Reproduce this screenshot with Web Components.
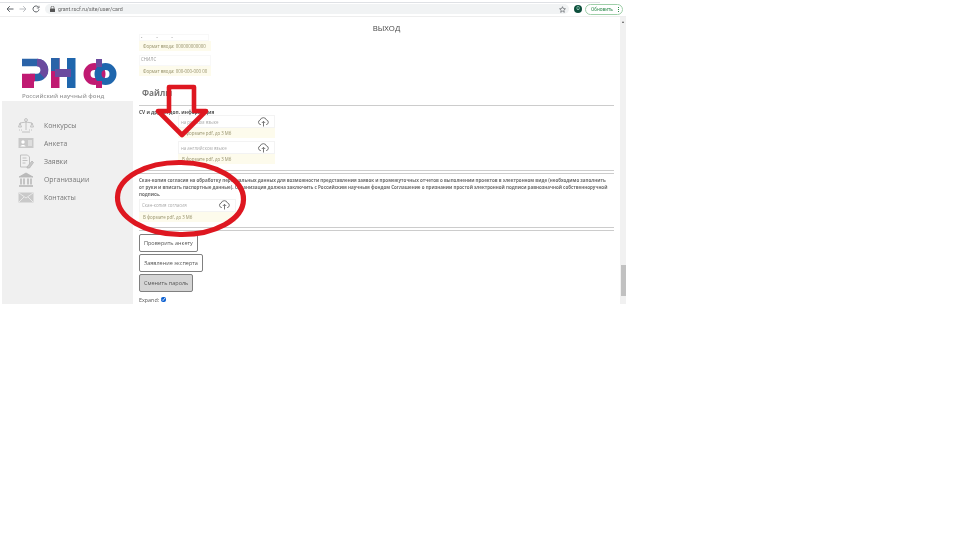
<!DOCTYPE html>
<html lang="ru">
<head>
<meta charset="utf-8">
<title>РНФ</title>
<style>
  html, body { margin: 0; background: #fff; }
  body { font-family: "Open Sans", "Liberation Sans", sans-serif; }
</style>
</head>
<body>
<browser-shot>
  <browser-bar slot="bar" url="grant.rscf.ru/site/user/card"></browser-bar>
  <site-sidebar slot="side">
    <nav-item icon="scales">Конкурсы</nav-item>
    <nav-item icon="card">Анкета</nav-item>
    <nav-item icon="doc">Заявки</nav-item>
    <nav-item icon="bank">Организации</nav-item>
    <nav-item icon="mail">Контакты</nav-item>
  </site-sidebar>
  <profile-page slot="main"></profile-page>
</browser-shot>

<script>
class BrowserShot extends HTMLElement {
  constructor() {
    super();
    this.attachShadow({ mode: "open" }).innerHTML = `
    <style>
      :host { display: block; position: relative; width: 626px; height: 304px; overflow: hidden; background: #fff; filter: blur(.4px); }
      .page { display: grid; grid-template-columns: 133px 1fr 6px; height: 287px; }
      .scroll { background: #f1f1f1; position: relative; }
      .scroll i { position: absolute; left: 1px; right: 0; top: 248px; height: 31px; background: #c1c1c1; }
      .scroll b { position: absolute; left: 2px; top: 4px; border: 1.5px solid transparent; border-bottom: 2px solid #555; border-top: 0; }
      svg { position: absolute; left: 0; top: 0; }
    </style>
    <slot name="bar"></slot>
    <div class="page">
      <slot name="side"></slot>
      <slot name="main"></slot>
      <div class="scroll"><b></b><i></i></div>
    </div>
    <svg width="626" height="304" viewBox="0 0 626 304" fill="none" stroke="#de1720">
      <polygon points="169,87 194,87 194,111 206,111 182,135 158,111 169,111" stroke-width="4.6" stroke-linejoin="round"/>
      <ellipse cx="180.5" cy="198.5" rx="63" ry="36" stroke-width="5.2" transform="rotate(1 180 198)"/>
    </svg>`;
  }
}

class BrowserBar extends HTMLElement {
  constructor() {
    super();
    this.attachShadow({ mode: "open" });
  }

  connectedCallback() {
    this.shadowRoot.innerHTML = `
    <style>
      :host { display: flex; align-items: center; box-sizing: border-box; width: 626px; height: 17px; padding: 3px 3px 1px 6px; gap: 5px; background: #fff; border-bottom: 1px solid #eee; background-image: linear-gradient(#dfe1e5 1px, transparent 1px); background-size: 600px 1px; background-position: 0 2px; background-repeat: no-repeat; }
      svg { flex: none; }
      .omni { flex: 1; height: 10px; border-radius: 5px; background: #f1f3f4; display: flex; align-items: center; gap: 3px; padding: 0 3px 0 5px; font: 5.3px "Roboto", sans-serif; color: #666; }
      .omni span { flex: 1; }
      .avatar { width: 8px; height: 8px; border-radius: 50%; background: #0d4f3c; color: #cfe; font: 4.5px/8px "Roboto", sans-serif; text-align: center; flex: none; }
      .update { flex: none; box-sizing: border-box; width: 38px; height: 11px; border: 1px solid #9fcfa9; border-radius: 5.5px; color: #2c8a4b; font: 4.8px/9px "Roboto", sans-serif; padding-left: 5px; position: relative; margin-left: -2px; }
      .update i { position: absolute; right: 3px; top: 2px; width: 1px; height: 1px; background: #2c8a4b; box-shadow: 0 2px #2c8a4b, 0 4px #2c8a4b; }
    </style>
    <svg width="8" height="8" viewBox="0 0 8 8" fill="none" stroke="#5f6368" stroke-width="1"><path d="M7.5 4H1M3.8 1.2 1 4l2.8 2.8"/></svg>
    <svg width="8" height="8" viewBox="0 0 8 8" fill="none" stroke="#b9bcc0" stroke-width="1"><path d="M.5 4H7M4.2 1.2 7 4 4.2 6.8"/></svg>
    <svg width="8" height="8" viewBox="0 0 8 8" fill="none" stroke="#5f6368" stroke-width="1"><path d="M6.6 2.4A3 3 0 1 0 7 4.4"/><path d="M7 .8v2.2H4.8" stroke-width=".8"/></svg>
    <div class="omni">
      <svg width="5" height="6" viewBox="0 0 5 6" fill="#555"><rect y="2.4" width="5" height="3.6" rx=".5"/><path d="M1 2.6V1.6a1.5 1.5 0 0 1 3 0v1" fill="none" stroke="#555" stroke-width=".7"/></svg>
      <span>${this.getAttribute("url")}</span>
      <svg width="7" height="7" viewBox="0 0 10 10" fill="none" stroke="#5f6368" stroke-width="1"><path d="m5 1 1.2 2.7 3 .3-2.3 2 .7 3L5 7.4 2.4 9l.7-3L.8 4l3-.3z"/></svg>
    </div>
    <div class="avatar">O</div>
    <div class="update">Обновить<i></i></div>`;
  }
}

class SiteLogo extends HTMLElement {
  constructor() {
    super();
    this.attachShadow({ mode: "open" }).innerHTML = `
    <style>
      :host { display: block; height: 84px; box-sizing: border-box; padding: 41px 0 0 22px; background: #fff; }
      svg { display: block; }
      p { margin: 3px 0 0; font-size: 6px; line-height: 9px; color: #9a9a9a; white-space: nowrap; font-weight: 600; }
    </style>
    <svg width="96" height="31" viewBox="0 0 96 31" fill="none" stroke-width="7.5">
      <path d="M0 4.500h15a7.500 7.500 0 0 1 0 15H8" stroke="#2a63a8"/>
      <path d="M15 4.500a7.500 7.500 0 0 1 5 13" stroke="#6b4a9e"/>
      <path d="M0 19.500h13" stroke="#c01a72"/>
      <rect x="0" y="19" width="12" height="11" fill="#c01a72" stroke="none"/>
      <rect x="29" y="0" width="8.500" height="30" fill="#c01a72" stroke="none"/>
      <rect x="29" y="0" width="8.500" height="13" fill="#2a63a8" stroke="none"/>
      <rect x="45" y="0" width="8.500" height="30" fill="#1f66ad" stroke="none"/>
      <path d="M33 11h16v8H33z" fill="#6b4a9e" stroke="none"/>
      <circle cx="72.500" cy="16" r="7.500" stroke="#c01a72" stroke-width="7"/>
      <circle cx="83.500" cy="16" r="7.500" stroke="#1f66ad" stroke-width="7"/>
      <rect x="74" y="1" width="6" height="8" fill="#6b4a9e" stroke="none"/>
      <rect x="74" y="23" width="6" height="7" fill="#c01a72" stroke="none"/>
    </svg>
    <p>Российский научный фонд</p>`;
  }
}

const ICONS = {
  scales: '<circle cx="8" cy="2" r="1.4"/><path d="M8 3.500V12M2 5l6-1 6 1M2 5 .5 9h3L2 5ZM14 5l-1.500 4h3L14 5ZM4 14h8"/><path d="M1 12h4M11 12h4" stroke-dasharray="1 1"/>',
  card: '<rect x=".5" y="2" width="15" height="10" fill="#c9c9c9" stroke="none"/><circle cx="5" cy="6" r="1.700" fill="#fff" stroke="none"/><path d="M2.500 10.500c0-2 5-2 5 0z" fill="#fff" stroke="none"/><path d="M10 5h4M10 7h4M10 9h4" stroke="#fff"/>',
  doc: '<path d="M2.500 1h7l2 2v10h-9zM4.500 4h4M4.500 6.500h5M4.500 9h3"/><path d="m9 13 5-6 1.500 1.500-4 5.500H9z" fill="#c9c9c9"/>',
  bank: '<path d="M1 5 8 1l7 4z" fill="#bbb"/><path d="M3 6.500v6M6 6.500v6M10 6.500v6M13 6.500v6" stroke-width="1.500"/><path d="M1 14h14" stroke-width="1.500"/>',
  mail: '<rect x=".5" y="2.500" width="15" height="10" fill="#c9c9c9" stroke="none"/><path d="m1 3 7 5 7-5M1 12l5-5M15 12l-5-5" stroke="#f0f0f0"/>'
};

class NavItem extends HTMLElement {
  constructor() {
    super();
    this.attachShadow({ mode: "open" });
  }

  connectedCallback() {
    this.shadowRoot.innerHTML = `
    <style>
      :host { display: flex; align-items: center; gap: 10px; height: 18px; font-size: 6.900px; color: #777; white-space: nowrap; }
      svg { flex: none; }
    </style>
    <svg width="16" height="15" viewBox="0 0 16 15" fill="none" stroke="#b5b5b5" stroke-width=".8">${ICONS[this.getAttribute("icon")]}</svg>
    <slot></slot>`;
  }
}

class SiteSidebar extends HTMLElement {
  constructor() {
    super();
    this.attachShadow({ mode: "open" });
    this.shadowRoot.innerHTML = `
    <style>
      :host { display: block; background: #fff; }
      .panel { margin-left: 2px; height: 203px; box-sizing: border-box; background: #f0f0f0; padding: 15px 0 0 16px; }
    </style>
    <site-logo></site-logo>
    <div class="panel"><slot></slot></div>`;
  }
}

class FormatHint extends HTMLElement {
  constructor() {
    super();
    this.attachShadow({ mode: "open" }).innerHTML = `
    <style>
      :host { display: block; box-sizing: border-box; height: 10px; background: #fdfbec; color: #96916a; font-size: 4.400px; line-height: 10px; padding-left: 4px; white-space: nowrap; }
    </style>
    <slot></slot>`;
  }
}

class FileField extends HTMLElement {
  constructor() {
    super();
    this.attachShadow({ mode: "open" });
  }

  connectedCallback() {
    this.shadowRoot.innerHTML = `
    <style>
      :host { display: block; width: 97px; }
      .input { display: flex; align-items: center; justify-content: space-between; box-sizing: border-box; height: 13px; padding: 0 4px 0 2px; background: #fff; border: 1px solid #f3f3f3; font-size: 4.400px; color: #aaa; white-space: nowrap; }
    </style>
    <div class="input"><span>${this.getAttribute("label")}</span>
      <svg width="13" height="10" viewBox="0 0 12 10" fill="none" stroke="#555" stroke-width=".8"><path d="M3.500 7.500H3a2.300 2.300 0 0 1-.3-4.500 3.300 3.300 0 0 1 6.300 0 2.300 2.300 0 0 1 0 4.500h-.5M6 9.500V4.500M4.300 6 6 4.300 7.700 6"/></svg>
    </div>
    <format-hint>В формате pdf, до 3 Мб</format-hint>`;
  }
}

class ActionButton extends HTMLElement {
  constructor() {
    super();
    this.attachShadow({ mode: "open" }).innerHTML = `
    <style>
      :host { display: block; width: fit-content; box-sizing: border-box; height: 18px; padding: 0 4px; border: 1px solid #808080; border-radius: 2px; background: #fff; color: #555; font-size: 5.500px; line-height: 16px; white-space: nowrap; }
      :host([pressed]) { background: #d5d5d5; }
    </style>
    <slot></slot>`;
  }
}

class ProfilePage extends HTMLElement {
  constructor() {
    super();
    this.attachShadow({ mode: "open" }).innerHTML = `
    <style>
      :host { display: block; box-sizing: border-box; padding: 0 6px 0 6px; background: #fff; overflow: hidden; color: #666; }
      .logout { text-align: center; font-size: 7.800px; line-height: 11px; color: #444; margin: 6px 0 0; height: 11px; padding-left: 20px; }
      .plain { width: 70px; background: #fff; border: 1px solid #f8f8f8; box-sizing: border-box; font-size: 4.400px; color: #999; padding-left: 1px; }
      .dots { height: 7px; line-height: 3px; letter-spacing: 6px; color: #444; font-size: 6px; }
      .snils { height: 11px; line-height: 6px; margin-top: 4px; width: 72px; }
      format-hint.short { width: 72px; }
      h2 { margin: 11px 0 0 3px; font-size: 8.200px; line-height: 12px; color: #777; font-weight: 700; }
      hr { border: 0; border-top: 1px solid #ccc; margin: 0; }
      .files hr { margin-top: 6px; }
      .cv { font-size: 4.800px; font-weight: 700; color: #555; line-height: 8px; margin-top: 2px; }
      .stack { margin: -1px 0 0 39px; display: grid; gap: 3px; }
      .double { height: 2px; border-top: 1px solid #ccc; border-bottom: 1px solid #ccc; }
      .consent { font-size: 4.500px; font-weight: 700; line-height: 7.200px; color: #6e6e6e; margin: 3px 0 0; white-space: nowrap; }
      .actions { display: grid; gap: 2px; margin-top: 3px; }
      .expand { display: flex; align-items: center; gap: 1px; font-size: 5.400px; color: #555; margin-top: 4px; height: 7px; }
      input { margin: 0 0 0 1px; width: 5px; height: 5px; accent-color: #0b5fd0; }
    </style>
    <div class="logout">ВЫХОД</div>
    <div class="plain dots">. . .</div>
    <format-hint class="short">Формат ввода: 000000000000</format-hint>
    <div class="plain snils">СНИЛС</div>
    <format-hint class="short">Формат ввода: 000-000-000 00</format-hint>
    <div class="files">
      <h2>Файлы</h2>
      <hr>
    </div>
    <div class="cv">CV и другая доп. информация</div>
    <div class="stack">
      <file-field label="на русском языке"></file-field>
      <file-field label="на английском языке"></file-field>
    </div>
    <div class="double" style="margin-top:6px"></div>
    <p class="consent">Скан-копия согласия на обработку персональных данных для возможности представления заявок и промежуточных отчетов о выполнении проектов в электронном виде (необходимо заполнить<br>от руки и вписать паспортные данные). Организация должна заключить с Российским научным фондом Соглашение о признании простой электронной подписи равнозначной собственноручной<br>подпись.</p>
    <file-field label="Скан-копия согласия"></file-field>
    <div class="double" style="margin-top:5.400px"></div>
    <div class="actions">
      <action-button>Проверить анкету</action-button>
      <action-button>Заявление эксперта</action-button>
      <action-button pressed>Сменить пароль</action-button>
    </div>
    <div class="expand">Expand: <input type="checkbox" checked></div>`;
  }
}

customElements.define("site-logo", SiteLogo);
customElements.define("nav-item", NavItem);
customElements.define("site-sidebar", SiteSidebar);
customElements.define("format-hint", FormatHint);
customElements.define("file-field", FileField);
customElements.define("action-button", ActionButton);
customElements.define("profile-page", ProfilePage);
customElements.define("browser-bar", BrowserBar);
customElements.define("browser-shot", BrowserShot);
</script>
</body>
</html>
